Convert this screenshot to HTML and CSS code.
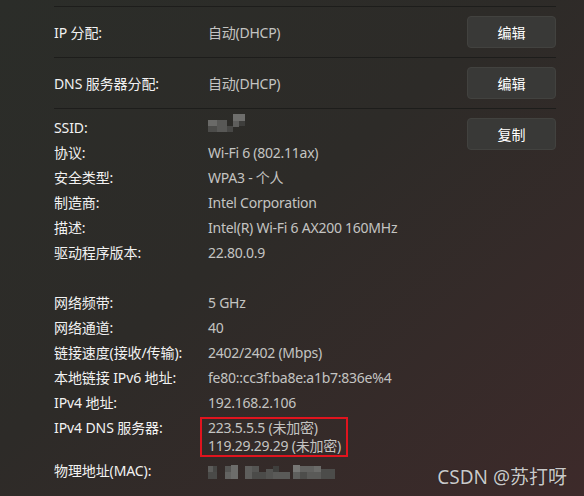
FILE: index.html
```html
<!DOCTYPE html>
<html>

<head>
    <title>网络属性</title>
    <link rel="stylesheet" href="styles.css">
</head>

<body>
    <div class="page">
        <div class="edit-row">
            <span class="label">IP 分配:</span>
            <span class="value">自动(DHCP)</span>
            <button class="btn" type="button">编辑</button>
        </div>
        <div class="edit-row">
            <span class="label">DNS 服务器分配:</span>
            <span class="value">自动(DHCP)</span>
            <button class="btn" type="button">编辑</button>
        </div>

        <div class="details">
            <div class="props">
                <div class="prop">
                    <span class="label">SSID:</span>
                    <span class="value">
                        <svg class="mosaic" width="38" height="18" viewBox="0 0 38 18">
                            <rect x="0" y="6" width="9" height="6" fill="#6a6a68"/>
                            <rect x="0" y="12" width="9" height="6" fill="#4c4c4a"/>
                            <rect x="9" y="6" width="10" height="12" fill="#585856"/>
                            <rect x="19" y="12" width="6" height="6" fill="#474745"/>
                            <rect x="25" y="0" width="12" height="7" fill="#6e6e6c"/>
                            <rect x="25" y="7" width="6" height="6" fill="#5e5e5c"/>
                            <rect x="31" y="7" width="6" height="5" fill="#3e3e3c"/>
                        </svg>
                    </span>
                </div>
                <div class="prop">
                    <span class="label">协议:</span>
                    <span class="value">Wi-Fi 6 (802.11ax)</span>
                </div>
                <div class="prop">
                    <span class="label">安全类型:</span>
                    <span class="value">WPA3 - 个人</span>
                </div>
                <div class="prop">
                    <span class="label">制造商:</span>
                    <span class="value">Intel Corporation</span>
                </div>
                <div class="prop">
                    <span class="label">描述:</span>
                    <span class="value">Intel(R) Wi-Fi 6 AX200 160MHz</span>
                </div>
                <div class="prop">
                    <span class="label">驱动程序版本:</span>
                    <span class="value">22.80.0.9</span>
                </div>
                <div class="prop spacer"></div>
                <div class="prop">
                    <span class="label">网络频带:</span>
                    <span class="value">5 GHz</span>
                </div>
                <div class="prop">
                    <span class="label">网络通道:</span>
                    <span class="value">40</span>
                </div>
                <div class="prop">
                    <span class="label">链接速度(接收/传输):</span>
                    <span class="value">2402/2402 (Mbps)</span>
                </div>
                <div class="prop">
                    <span class="label">本地链接 IPv6 地址:</span>
                    <span class="value">fe80::cc3f:ba8e:a1b7:836e%4</span>
                </div>
                <div class="prop">
                    <span class="label">IPv4 地址:</span>
                    <span class="value">192.168.2.106</span>
                </div>
                <div class="prop">
                    <span class="label">IPv4 DNS 服务器:</span>
                    <span class="value">
                        <span class="marked">
                            <span class="line">223.5.5.5 (未加密)</span>
                            <span class="line">119.29.29.29 (未加密)</span>
                        </span>
                    </span>
                </div>
                <div class="prop">
                    <span class="label">物理地址(MAC):</span>
                    <span class="value">
                        <svg class="mosaic" width="128" height="15" viewBox="0 0 128 15">
                            <rect x="0" y="1" width="5" height="6" fill="#5c5c5a"/>
                            <rect x="0" y="7" width="9" height="7" fill="#4a4a48"/>
                            <rect x="5" y="1" width="4" height="6" fill="#474745"/>
                            <rect x="17" y="1" width="6" height="6" fill="#555553"/>
                            <rect x="17" y="7" width="6" height="7" fill="#636361"/>
                            <rect x="23" y="0" width="7" height="14" fill="#6d6d6b"/>
                            <rect x="37" y="1" width="7" height="13" fill="#5e5e5c"/>
                            <rect x="44" y="1" width="7" height="6" fill="#555553"/>
                            <rect x="44" y="7" width="14" height="7" fill="#4b4b49"/>
                            <rect x="58" y="4" width="7" height="10" fill="#535351"/>
                            <rect x="65" y="1" width="6" height="6" fill="#3f3f3d"/>
                            <rect x="65" y="7" width="17" height="7" fill="#5a5a58"/>
                            <rect x="85" y="0" width="7" height="7" fill="#777775"/>
                            <rect x="85" y="7" width="7" height="7" fill="#5f5f5d"/>
                            <rect x="92" y="1" width="14" height="6" fill="#626260"/>
                            <rect x="92" y="7" width="7" height="7" fill="#4d4d4b"/>
                            <rect x="99" y="7" width="14" height="7" fill="#5a5a58"/>
                            <rect x="106" y="1" width="7" height="6" fill="#6b6b69"/>
                            <rect x="113" y="4" width="14" height="10" fill="#4c4c4a"/>
                        </svg>
                    </span>
                </div>
            </div>
            <button class="btn copy" type="button">复制</button>
        </div>
    </div>

    <div class="watermark">CSDN @苏打呀</div>
</body>

</html>
```

FILE: styles.css
```css
html,
body {
    margin: 0;
    height: 100%;
}

body {
    position: relative;
    width: 584px;
    height: 496px;
    overflow: hidden;
    background: linear-gradient(to bottom right, #2b2d29 0%, #2d2b28 45%, #3d2a2a 100%);
    font-family: "Noto Sans", "Noto Sans CJK SC", sans-serif;
    font-size: 14px;
    color: #ffffff;
}

.page {
    padding: 6px 28px 0 54px;
}

.edit-row {
    display: flex;
    align-items: center;
    height: 50px;
    border-top: 1px solid #1d1d1b;
}

.edit-row:nth-child(2) {
    border-bottom: 1px solid #1d1d1b;
}

.label {
    width: 154px;
    flex-shrink: 0;
    color: #f2f2f2;
    letter-spacing: -0.1px;
}

.value {
    color: #c4c4c2;
    letter-spacing: -0.25px;
}

.btn {
    margin-left: auto;
    width: 89px;
    height: 32px;
    background-color: #393937;
    border: 1px solid #42423f;
    border-radius: 4px;
    color: #ffffff;
    font-family: inherit;
    font-size: 14px;
    padding: 0;
}

.details {
    display: flex;
    align-items: flex-start;
}

.props {
    padding-top: 6.5px;
}

.prop {
    display: flex;
    padding: 3.5px 0;
    line-height: 18px;
    white-space: nowrap;
}

.spacer {
    height: 18px;
}

.copy {
    margin-top: 9px;
}

.mosaic {
    display: block;
}

.prop .mosaic {
    margin-top: -5px;
}

.prop:last-child .mosaic {
    margin-top: 3px;
}

.marked {
    display: flex;
    flex-direction: column;
    margin: -2px 0 -2px -8px;
    padding: 0 5px 0 6px;
    border: 2px solid #e0141e;
}

.watermark {
    position: absolute;
    right: 17px;
    bottom: 6px;
    font-size: 19px;
    color: #c9c9c9;
    text-shadow: 0 0 1px rgba(0, 0, 0, 0.6);
}
```
